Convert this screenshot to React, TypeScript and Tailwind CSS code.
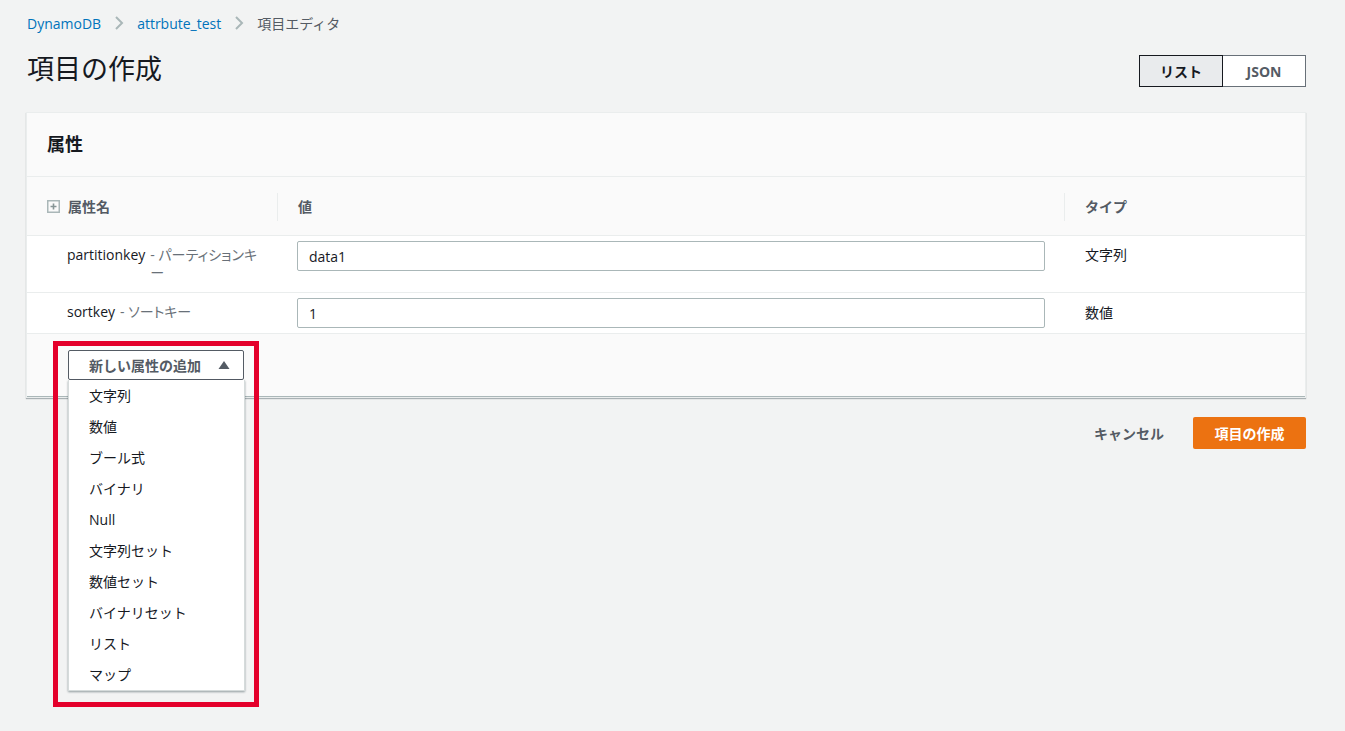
import React from "react";

const font = { fontFamily: '"Open Sans", "Noto Sans", "Noto Sans CJK JP", sans-serif' };

function Chevron() {
  return (
    <svg width="10" height="16" viewBox="0 0 10 16" className="mx-[13px]">
      <path d="M2 2 L8 8 L2 14" fill="none" stroke="#aab7b8" strokeWidth="2" />
    </svg>
  );
}

function PlusBox() {
  return (
    <svg width="13" height="13" viewBox="0 0 13 13" className="mr-2">
      <rect x="0.75" y="0.75" width="11.5" height="11.5" fill="none" stroke="#aab7b8" strokeWidth="1.5" />
      <path d="M6.5 3.5 V9.5 M3.5 6.5 H9.5" stroke="#879596" strokeWidth="1.6" />
    </svg>
  );
}

const items = ["文字列", "数値", "ブール式", "バイナリ", "Null", "文字列セット", "数値セット", "バイナリセット", "リスト", "マップ"];

export default function App() {
  return (
    <div className="min-h-[731px] w-full bg-[#f2f3f3] text-[#16191f] text-[14px]" style={font}>
      <div className="pl-[26px] pr-[39px] pt-[12px]">
        {/* breadcrumb */}
        <div className="flex items-center h-[22px] text-[14px] pl-[1px]">
          <span className="text-[#0073bb]">DynamoDB</span>
          <Chevron />
          <span className="text-[#0073bb]">attrbute_test</span>
          <Chevron />
          <span className="text-[#545b64]">項目エディタ</span>
        </div>
        {/* title row */}
        <div className="flex items-center justify-between mt-[16px] h-[38px]">
          <h1 className="text-[27px] font-normal pl-[1px] leading-none text-[#16191f] -mt-[2px]">項目の作成</h1>
          <div className="flex mt-[4px]">
            <div className="w-[84px] h-[32px] flex items-center justify-center border border-[#16191f] bg-[#e9ebed] font-bold text-[#16191f]">リスト</div>
            <div className="w-[83px] h-[32px] flex items-center justify-center border border-l-0 border-[#687078] bg-white font-bold text-[#545b64]">JSON</div>
          </div>
        </div>

        {/* panel */}
        <div className="mt-[24px] bg-white border border-[#eaeded] shadow-[0_1px_1px_0_rgba(0,28,36,0.3)] relative">
          <div className="h-[64px] flex items-center px-[20px] bg-[#fafafa] border-b border-[#eaeded]">
            <h2 className="text-[18px] font-bold">属性</h2>
          </div>
          <div className="grid grid-cols-[251px_1fr_240px]">
            {/* header */}
            <div className="h-[59px] bg-[#fafafa] flex items-center pl-[20px] relative border-b border-[#eaeded]">
              <PlusBox />
              <span className="font-bold text-[#545b64]">属性名</span>
              <div className="absolute right-0 top-[16px] h-[28px] w-px bg-[#eaeded]" />
            </div>
            <div className="h-[59px] bg-[#fafafa] flex items-center pl-[20px] relative border-b border-[#eaeded]">
              <span className="font-bold text-[#545b64]">値</span>
              <div className="absolute right-0 top-[16px] h-[28px] w-px bg-[#eaeded]" />
            </div>
            <div className="h-[59px] bg-[#fafafa] flex items-center pl-[20px] border-b border-[#eaeded]">
              <span className="font-bold text-[#545b64]">タイプ</span>
            </div>

            {/* row 1 */}
            <div className="flex pl-[40px] pr-[17px] py-[10px] leading-[18px] border-b border-[#eaeded]">
              <span className="shrink-0">partitionkey</span>
              <span className="text-[#687078] ml-[5px] [font-feature-settings:'palt']">- パーティションキー</span>
            </div>
            <div className="pl-[19px] pr-[20px] pt-[5px] border-b border-[#eaeded]">
              <div className="h-[30px] border border-[#aab7b8] rounded-[2px] flex items-center px-[11px]">data1</div>
            </div>
            <div className="pl-[20px] py-[10px] leading-[18px] border-b border-[#eaeded]">文字列</div>

            {/* row 2 */}
            <div className="flex pl-[40px] pr-[17px] py-[10px] leading-[18px] border-b border-[#eaeded]">
              <span>sortkey</span>
              <span className="text-[#687078] ml-[5px] [font-feature-settings:'palt']">- ソートキー</span>
            </div>
            <div className="pl-[19px] pr-[20px] py-[5px] border-b border-[#eaeded]">
              <div className="h-[30px] border border-[#aab7b8] rounded-[2px] flex items-center px-[11px]">1</div>
            </div>
            <div className="pl-[20px] py-[10px] leading-[18px] border-b border-[#eaeded] flex items-center">数値</div>
          </div>

          {/* footer */}
          <div className="h-[63px] bg-[#fafafa] border-b border-[#aab7b8] pl-[41px] pt-[16px]">
            <div className="relative w-[176px]">
              <div className="h-[30px] border border-[#545b64] rounded-[2px] bg-white flex items-center pl-[20px] pr-[13px] justify-between font-bold text-[#545b64]">
                <span>新しい属性の追加</span>
                <svg width="12" height="10" viewBox="0 0 12 10"><path d="M6 1 L11.5 9 H0.5 Z" fill="#545b64" /></svg>
              </div>
              <div className="absolute left-0 top-[30px] w-[177px] bg-white border border-[#d5dbdb] border-t-0 shadow-[0_1px_2px_0_rgba(0,28,36,0.4)] z-10">
                {items.map((it) => (
                  <div key={it} className="h-[31px] flex items-center pl-[20px] text-[#16191f]">{it}</div>
                ))}
              </div>
              <div className="absolute left-[-15px] top-[-9px] w-[206px] h-[366px] border-[5px] border-[#e4002b] z-20 pointer-events-none" />
            </div>
          </div>
        </div>

        {/* actions */}
        <div className="flex justify-end items-center mt-[19px] pr-[0px]">
          <span className="font-bold text-[#545b64] mr-[29px]">キャンセル</span>
          <div className="w-[113px] h-[32px] rounded-[2px] bg-[#ec7211] text-white font-bold flex items-center justify-center">項目の作成</div>
        </div>
      </div>
    </div>
  );
}
